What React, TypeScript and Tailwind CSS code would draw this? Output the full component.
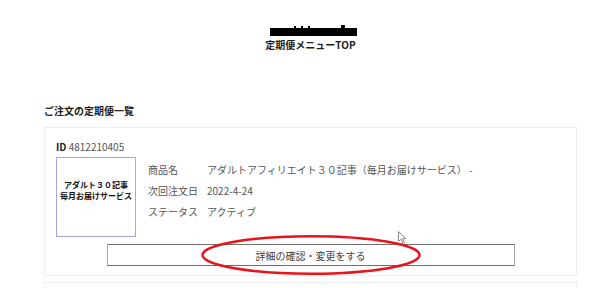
const font = { fontFamily: '"Noto Sans CJK JP", "Noto Sans", sans-serif' };

const rows = [
  { label: "商品名", value: "アダルトアフィリエイト３０記事（毎月お届けサービス） -" },
  { label: "次回注文日", value: "2022-4-24" },
  { label: "ステータス", value: "アクティブ" },
];

const App = () => {
  return (
    <div
      className="relative w-[600px] h-[288px] overflow-hidden bg-white text-[#333]"
      style={font}
    >
      <div className="ml-[44px] w-[533px]">
        {/* Header (redacted shop name) */}
        <div className="relative pt-[28px]">
          <div className="ml-[226px] w-[87px] h-[8px] bg-black" />
          <span className="absolute left-[250px] top-[26px] w-[2px] h-[2px] bg-black" />
          <span className="absolute left-[257px] top-[26px] w-[2px] h-[2px] bg-black" />
          <span className="absolute left-[264px] top-[26px] w-[2px] h-[2px] bg-black" />
          <span className="absolute left-[297px] top-[25px] w-[4px] h-[3px] bg-black" />
          <div className="mt-[2px] text-center text-[10px] leading-[14px] font-bold text-[#222]">
            定期便メニューTOP
          </div>
        </div>

        {/* Section heading */}
        <h2 className="mt-[52px] text-[10px] leading-[14px] font-bold text-[#222]">
          ご注文の定期便一覧
        </h2>

        {/* Subscription card */}
        <div className="mt-[9px] border border-[#eceef3] px-[11px] pt-[12px] pb-[9px]">
          <div className="text-[10px] leading-[14px] text-[#555]">
            <span className="font-bold text-[#222]">ID</span> 4812210405
          </div>
          <div className="mt-[3px] flex">
            <div className="w-[80px] h-[80px] shrink-0 border border-[#a3a3ee] pt-[21px] text-center text-[8px] leading-[11px] font-bold text-[#111]">
              アダルト３０記事
              <br />
              毎月お届けサービス
            </div>
            <div className="ml-[12px] pt-[2px] text-[10px] leading-[21px] text-[#555]">
              {rows.map((r) => (
                <div key={r.label} className="flex">
                  <span className="w-[59px] shrink-0">{r.label}</span>
                  <span>{r.value}</span>
                </div>
              ))}
            </div>
          </div>
          <button className="mx-auto mt-[7px] flex h-[22px] w-[408px] items-center justify-center border border-y-[#707070] border-x-[#a8a8a8] bg-white text-[10px] text-[#444]">
            詳細の確認・変更をする
          </button>
        </div>

        {/* Next card (cut off) */}
        <div className="mt-[6px] h-[20px] border border-[#eceef3]" />
      </div>

      {/* Red annotation ellipse */}
      <svg
        className="absolute left-[198px] top-[232px]"
        width="226"
        height="46"
        viewBox="0 0 226 46"
      >
        <ellipse cx="113" cy="23" rx="108.5" ry="18.8" fill="none" stroke="#e8141c" strokeWidth="2.5" />
      </svg>

      {/* Mouse cursor */}
      <svg className="absolute left-[398px] top-[231px]" width="10" height="14" viewBox="0 0 10 14">
        <path
          d="M0.5 0.5 L0.5 10.5 L3 8.2 L4.8 12.3 L6.4 11.6 L4.7 7.6 L8 7.6 Z"
          fill="#fff"
          stroke="#8a8a8a"
          strokeWidth="1"
          strokeLinejoin="round"
        />
      </svg>
    </div>
  );
};

export default App;
